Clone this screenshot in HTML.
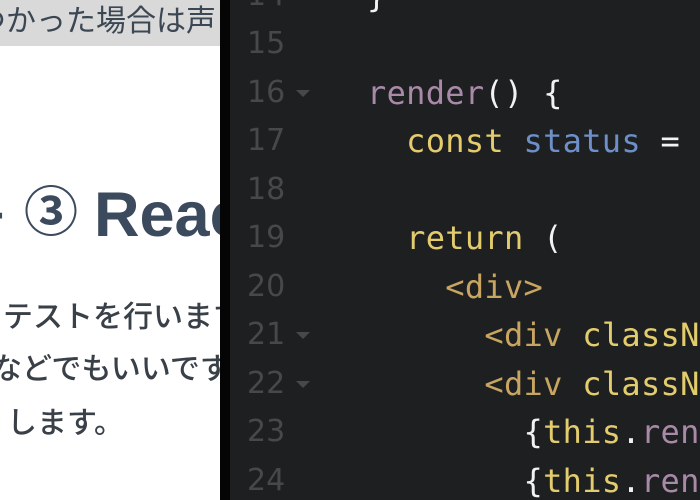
<!DOCTYPE html>
<html><head><meta charset="utf-8"><style>
*{margin:0;padding:0;box-sizing:border-box}
body{width:700px;height:500px;overflow:hidden;position:relative;background:#fff;font-family:"Liberation Sans","Noto Sans CJK JP",sans-serif}
.left{position:absolute;left:0;top:0;width:220px;height:500px;background:#fff;overflow:hidden}
.hdr{position:absolute;left:0;top:0;width:220px;height:46px;background:#d9d9d9}
.hdr span{position:absolute;left:-24px;top:4px;font-size:30px;color:#3c4754;white-space:nowrap;line-height:36px}
.h{position:absolute;top:178px;font-weight:bold;color:#3b4a5c;white-space:nowrap;line-height:70px}
.p{position:absolute;font-size:30px;color:#3a4048;white-space:nowrap;line-height:36px;font-weight:500}
.sep{position:absolute;left:220px;top:0;width:10px;height:500px;background:#050505}
.code{position:absolute;left:230px;top:0;width:470px;height:500px;background:#1e1f21;overflow:hidden}
.ln{position:absolute;left:0;width:470px;height:48.5px;font-family:"DejaVu Sans Mono","Liberation Mono",monospace;font-size:32px;white-space:pre;line-height:48.5px}
.n{position:absolute;left:17px;color:#47484a;font-family:"DejaVu Sans","Liberation Sans",sans-serif;font-size:30px}
.t{position:absolute;left:137px;letter-spacing:0.3px}
.ar{position:absolute;left:66px;top:21px;width:0;height:0;border-left:7px solid transparent;border-right:7px solid transparent;border-top:7px solid #47484a}
.pu{color:#a88aa8}.w{color:#f2f2f2}.y{color:#e3cc6d}.b{color:#6e90c8}.o{color:#c8a560}
</style></head><body>
<div class="left">
<div class="hdr"><span>つかった場合は声</span></div>
<div class="h" style="left:-12px;font-size:48px">-</div>
<div class="h" style="left:24px;font-size:54px">③</div>
<div class="h" style="left:94px;font-size:63px;top:180px">React</div>
<div class="p" style="left:-27px;top:300px">てテストを行います</div>
<div class="p" style="left:-8px;top:352px">などでもいいです</div>
<div class="p" style="left:7px;top:406px">します。</div>
</div>
<div class="sep"></div>
<div class="code">
<div class="ln" style="top:-28px"><span class="n">14</span><span class="t w">}</span></div>
<div class="ln" style="top:20px"><span class="n">15</span></div>
<div class="ln" style="top:68.5px"><span class="n">16</span><span class="ar"></span><span class="t"><span class="pu">render</span><span class="w">() {</span></span></div>
<div class="ln" style="top:117px"><span class="n">17</span><span class="t">  <span class="y">const</span> <span class="b">status</span> <span class="w">=</span></span></div>
<div class="ln" style="top:165.5px"><span class="n">18</span></div>
<div class="ln" style="top:214px"><span class="n">19</span><span class="t">  <span class="y">return</span> <span class="w">(</span></span></div>
<div class="ln" style="top:262.5px"><span class="n">20</span><span class="t">    <span class="o">&lt;div&gt;</span></span></div>
<div class="ln" style="top:311px"><span class="n">21</span><span class="ar"></span><span class="t">      <span class="o">&lt;div</span> <span class="y">className</span></span></div>
<div class="ln" style="top:359.5px"><span class="n">22</span><span class="ar"></span><span class="t">      <span class="o">&lt;div</span> <span class="y">className</span></span></div>
<div class="ln" style="top:408px"><span class="n">23</span><span class="t">        <span class="w">{</span><span class="y">this</span><span class="w">.</span><span class="pu">render</span></span></div>
<div class="ln" style="top:456.5px"><span class="n">24</span><span class="t">        <span class="w">{</span><span class="y">this</span><span class="w">.</span><span class="pu">render</span></span></div>
</div>
</body></html>
